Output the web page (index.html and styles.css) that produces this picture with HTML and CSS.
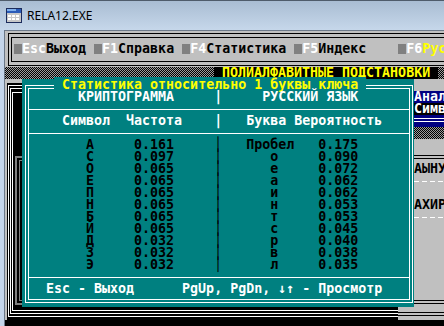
FILE: index.html
```html
<!DOCTYPE html>
<html lang="ru">
<head>
    <meta charset="UTF-8">
    <title>RELA12.EXE</title>
    <link rel="stylesheet" href="styles.css">
</head>
<body>
<div class="window">
    <div class="titlebar">
        <svg class="app-icon" width="16" height="15" viewBox="0 0 16 15">
            <rect x="0.5" y="0.5" width="15" height="14" fill="#c8c8c8" stroke="#1c2c5c"/>
            <rect x="1" y="1" width="14" height="4" fill="#2a5bb8"/>
            <rect x="1" y="1" width="9" height="2" fill="#7fb0ec"/>
            <g fill="#ffffff">
                <rect x="2" y="7" width="3" height="2"/><rect x="6" y="7" width="3" height="2"/><rect x="10" y="7" width="3" height="2"/>
                <rect x="2" y="10" width="3" height="2"/><rect x="6" y="10" width="3" height="2"/><rect x="10" y="10" width="3" height="2"/>
            </g>
        </svg>
        <span class="title">RELA12.EXE</span>
    </div>
    <div class="client">
        <div class="menu">
            <div class="menu-outer">
                <div class="menu-inner"><span class="hk"></span><span class="key">Esc</span>Выход <span class="hk"></span><span class="key">F1</span>Справка <span class="hk"></span><span class="key">F4</span>Статистика <span class="hk"></span><span class="key">F5</span>Индекс    <span class="hk"></span><span class="key">F6</span><span class="active">Русский</span></div>
            </div>
        </div>
        <div class="strip"><span class="banner"> ПОЛИАЛФАВИТНЫЕ ПОДСТАНОВКИ </span></div>
        <div class="desk">
            <div class="stack">
                <div class="st-back">
                    <div class="st st-a"><div class="st st-b"><div class="st st-c">
                        <div class="gw"><div class="gw-in"></div></div>
                    </div></div></div>
                </div>
            </div>
            <div class="side-win">
                <div class="sw-row"></div>
                <div class="sw-row sw-blue">  Анализ</div>
                <div class="sw-row sw-black">  Символ</div>
                <div class="sw-row sw-dbl"></div>
                <div class="sw-row sw-shade"></div>
                <div class="sw-row"></div>
                <div class="sw-row sw-dbl-dark"></div>
                <div class="sw-row">  АЫНУ</div>
                <div class="sw-row sw-dash"></div>
                <div class="sw-row"></div>
                <div class="sw-row">  АХИР</div>
                <div class="sw-row sw-dash"></div>
                <div class="sw-gap"></div>
                <div class="sw-row sw-dbl-low"></div>
                <div class="sw-row sw-dbl-low"></div>
            </div>
            <div class="dialog">
                <div class="dlg-frame"></div>
                <div class="row">    <span class="dlg-title"> Статистика относительно 1 буквы ключа </span></div>
                <div class="row hd">       КРИПТОГРАММА     |     РУССКИЙ ЯЗЫК</div>
                <div class="row rule"></div>
                <div class="row hd">     Символ  Частота    |   Буква Вероятность</div>
                <div class="row rule"></div>
                <div class="row">        А     0.161     │   Пробел   0.175</div>
                <div class="row">        С     0.097     │      о     0.090</div>
                <div class="row">        О     0.065     │      е     0.072</div>
                <div class="row">        Е     0.065     │      а     0.062</div>
                <div class="row">        П     0.065     │      и     0.062</div>
                <div class="row">        Н     0.065     │      н     0.053</div>
                <div class="row">        Б     0.065     │      т     0.053</div>
                <div class="row">        Й     0.065     │      с     0.045</div>
                <div class="row">        Д     0.032     │      р     0.040</div>
                <div class="row">        З     0.032     │      в     0.038</div>
                <div class="row">        Э     0.032     │      л     0.035</div>
                <div class="row rule"></div>
                <div class="row hd">   Esc - Выход      PgUp, PgDn, ↓↑ - Просмотр</div>
                <div class="row"></div>
            </div>
        </div>
    </div>
</div>
</body>
</html>
```

FILE: styles.css
```css
* {
    box-sizing: border-box;
}
body {
    margin: 0;
    width: 444px;
    height: 326px;
    overflow: hidden;
    background: #c4d5ea;
}
.window {
    width: 444px;
    height: 326px;
    display: flex;
    flex-direction: column;
    border-top: 1px solid #4f5c6b;
    background: #c4d5ea;
}
.titlebar {
    height: 29px;
    flex: none;
    display: flex;
    align-items: center;
    gap: 5px;
    padding: 0 0 1px 6px;
    background: linear-gradient(#a9bdd3, #c6d7ea);
    font-family: "Noto Sans", sans-serif;
    font-size: 12px;
    color: #000;
}
.client {
    flex: 1;
    margin-left: 4px;
    border-left: 1px solid #6b7888;
    border-top: 1px solid #6b7888;
    background: #c0c0c0;
    overflow: hidden;
    font-family: "DejaVu Sans Mono", monospace;
    font-weight: bold;
    font-size: 13.3px;
    line-height: 12px;
}

/* menu bar, rows 0-2 */
.menu {
    height: 36px;
    padding: 2px 0 1px 3px;
}
.menu-outer {
    width: 460px;
    border: 1px solid #000;
    border-right: none;
    padding: 3px 0 3px 2px;
}
.menu-inner {
    height: 25px;
    border: 1px solid #000;
    border-right: none;
    padding: 5px 0 0 2px;
    color: #000;
    white-space: pre;
}
.hk {
    display: inline-block;
    width: 8px;
    height: 10px;
    vertical-align: -1px;
    background: #808080;
}
.key {
    color: #fff;
}
.active {
    color: #ffff00;
}

/* title strip, row 3 */
.strip {
    height: 12px;
    white-space: pre;
    background: repeating-conic-gradient(#000 0 25%, #9c9c9c 0 50%) 0 0 / 2px 2px;
}
.banner {
    display: inline-block;
    height: 12px;
    margin-left: 209px;
    background: #000;
    color: #ffff00;
}

/* windows left behind the dialog */
.desk {
    position: relative;
    height: 247px;
    background: #000;
}
.stack {
    height: 241px;
    width: 393px;
    background: #c0c0c0;
    padding: 4px 0 0 2px;
}
.st-back {
    height: 100%;
    background: #000;
    padding: 2px 0 3px 1px;
}
.st {
    height: 100%;
    border: 1px solid #fff;
    border-right: none;
}
.st-a {
    padding: 2px 0 2px 1px;
}
.st-b {
    padding: 3px 0 2px 1px;
}
.st-c {
    padding: 63px 0 5px 2px;
}
.gw {
    height: 100%;
    border: 2px solid #808080;
    border-right: none;
    padding: 2px 0 2px 2px;
}
.gw-in {
    height: 100%;
    border: 1px solid #808080;
    border-right: none;
}
.side-win {
    position: absolute;
    left: 393px;
    top: 0;
    right: 0;
    height: 241px;
    background: #c0c0c0;
    color: #000;
    display: flex;
    flex-direction: column;
}
.sw-row {
    height: 12px;
    flex: none;
    white-space: pre;
    overflow: hidden;
}
.sw-gap {
    height: 72px;
    flex: none;
}
.sw-blue {
    background: #000080;
    color: #fff;
}
.sw-black {
    background: #000;
    color: #fff;
}
.sw-dbl {
    background: linear-gradient(#fff, #fff) 0 3px / 100% 1px no-repeat,
                linear-gradient(#fff, #fff) 0 6px / 100% 1px no-repeat, #000080;
}
.sw-shade {
    background: repeating-conic-gradient(#000 0 25%, #9c9c9c 0 50%) 0 0 / 2px 2px;
}
.sw-dbl-dark {
    background: linear-gradient(#000, #000) 0 4px / 100% 1px no-repeat,
                linear-gradient(#000, #000) 0 7px / 100% 1px no-repeat;
}
.sw-dbl-low {
    background: linear-gradient(#000, #000) 0 5px / 100% 1px no-repeat,
                linear-gradient(#000, #000) 0 8px / 100% 1px no-repeat;
}
.sw-dash {
    background: repeating-linear-gradient(90deg, #fff 0 5px, transparent 5px 8px) 0 6px / 100% 1px no-repeat;
}

/* statistics dialog */
.dialog {
    position: absolute;
    left: 17px;
    top: 0;
    width: 392px;
    height: 228px;
    background: #008080;
    color: #000;
}
.dlg-frame {
    position: absolute;
    left: 3px;
    top: 6px;
    right: 1px;
    bottom: 4px;
    border: 1px solid #fff;
}
.dlg-frame::before {
    content: "";
    position: absolute;
    inset: 2px;
    border: 1px solid #fff;
}
.row {
    position: relative;
    height: 12px;
    white-space: pre;
}
.dlg-title {
    background: #008080;
    color: #ffff00;
}
.hd {
    color: #fff;
}
.rule {
    background: linear-gradient(#fff, #fff) 6px 6px / 382px 1px no-repeat;
}
```
